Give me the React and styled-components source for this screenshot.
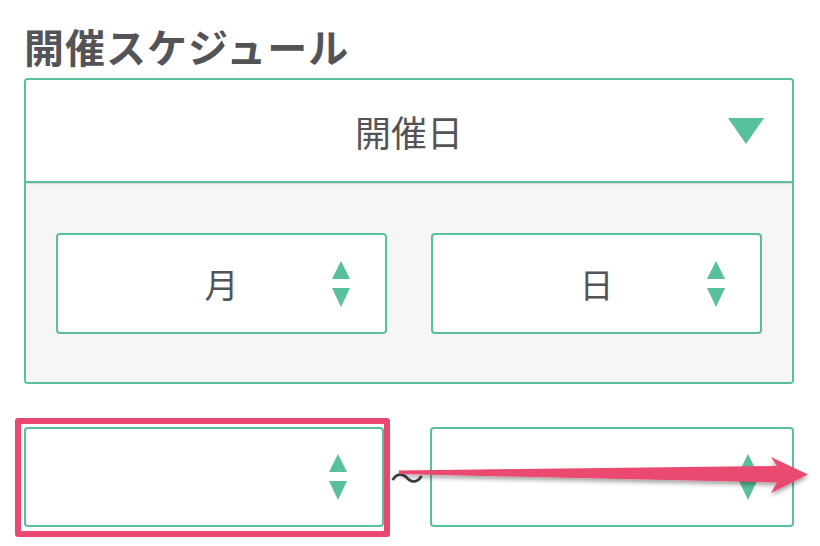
import React from "react";
import styled, { createGlobalStyle } from "styled-components";

const GREEN = "#58c09b";
const RED = "#ea4870";
const TEXT = "#545458";

const Global = createGlobalStyle`
  html, body { margin: 0; padding: 0; background: #fff; }
  body { font-family: "Noto Sans CJK JP", "Noto Sans", sans-serif; color: ${TEXT}; }
`;

const Page = styled.div`
  position: relative;
  width: 820px;
  height: 546px;
  box-sizing: border-box;
  padding: 22px 26px 0 24px;
  overflow: hidden;
`;

const Title = styled.h2`
  margin: 0 0 8px 0;
  font-size: 40px;
  line-height: 48px;
  font-weight: 700;
  color: ${TEXT};
  letter-spacing: 1px;
`;

const Panel = styled.div`
  border: 2px solid ${GREEN};
  border-radius: 4px;
  overflow: hidden;
`;

const PanelHeader = styled.div`
  position: relative;
  height: 101px;
  display: flex;
  align-items: center;
  justify-content: center;
  background: #fff;
  border-bottom: 2px solid ${GREEN};
  box-shadow: 0 1px 1px rgba(150, 140, 110, 0.25);
  font-size: 36px;
  color: ${TEXT};
`;

const HeaderCaret = styled.span`
  position: absolute;
  right: 28px;
  top: 50%;
  transform: translateY(-50%);
  width: 0;
  height: 0;
  border-left: 18px solid transparent;
  border-right: 18px solid transparent;
  border-top: 26px solid ${GREEN};
`;

const PanelBody = styled.div`
  background: #f6f6f6;
  padding: 50px 30px 48px;
  display: grid;
  grid-template-columns: 1fr 1fr;
  column-gap: 44px;
`;

const SelectBox = styled.div`
  position: relative;
  box-sizing: border-box;
  height: ${(p) => p.$h}px;
  flex: 1 1 0;
  min-width: 0;
  border: 2px solid ${GREEN};
  border-radius: 4px;
  background: #fff;
  display: flex;
  align-items: center;
  justify-content: center;
  font-size: 34px;
  color: ${TEXT};
`;

const Spinner = styled.span`
  position: absolute;
  right: 35px;
  top: 50%;
  transform: translateY(-50%);
  display: flex;
  flex-direction: column;
  align-items: center;
  gap: 9px;
`;

const Tri = styled.span`
  width: 0;
  height: 0;
  border-left: 9.5px solid transparent;
  border-right: 9.5px solid transparent;
  ${(p) =>
    p.$up
      ? `border-bottom: 18px solid ${GREEN};`
      : `border-top: 19px solid ${GREEN};`}
`;

const RangeRow = styled.div`
  margin-top: 43px;
  display: flex;
  align-items: center;
`;

const HighlightWrap = styled.div`
  position: relative;
  flex: 1 1 0;
  min-width: 0;
  display: flex;
`;

const Highlight = styled.span`
  position: absolute;
  top: -9px;
  left: -9px;
  right: -6px;
  bottom: -10px;
  border: 6px solid ${RED};
  border-radius: 3px;
  pointer-events: none;
`;

const Tilde = styled.span`
  flex: 0 0 46px;
  text-align: center;
  font-size: 34px;
  color: #3e3e42;
  line-height: 1;
`;

const ArrowLayer = styled.svg`
  position: absolute;
  left: 0;
  top: 0;
  pointer-events: none;
`;

function Select({ label, height = 101 }) {
  return (
    <SelectBox $h={height}>
      {label}
      <Spinner>
        <Tri $up />
        <Tri />
      </Spinner>
    </SelectBox>
  );
}

export default function App() {
  return (
    <>
      <Global />
      <Page>
        <Title>開催スケジュール</Title>
        <Panel>
          <PanelHeader>
            開催日
            <HeaderCaret />
          </PanelHeader>
          <PanelBody>
            <Select label="月" />
            <Select label="日" />
          </PanelBody>
        </Panel>
        <RangeRow>
          <HighlightWrap>
            <Select height={100} />
            <Highlight />
          </HighlightWrap>
          <Tilde>〜</Tilde>
          <Select height={100} />
        </RangeRow>
        <ArrowLayer width="820" height="546" viewBox="0 0 820 546">
          <defs>
            <filter id="sh" x="-10%" y="-50%" width="120%" height="200%">
              <feDropShadow dx="0" dy="3" stdDeviation="2" floodColor="#000" floodOpacity="0.35" />
            </filter>
          </defs>
          <polygon
            points="399,470.5 777,466 771,457 808,474.5 771,493 777,482.5 399,474"
            fill={RED}
            filter="url(#sh)"
          />
        </ArrowLayer>
      </Page>
    </>
  );
}
